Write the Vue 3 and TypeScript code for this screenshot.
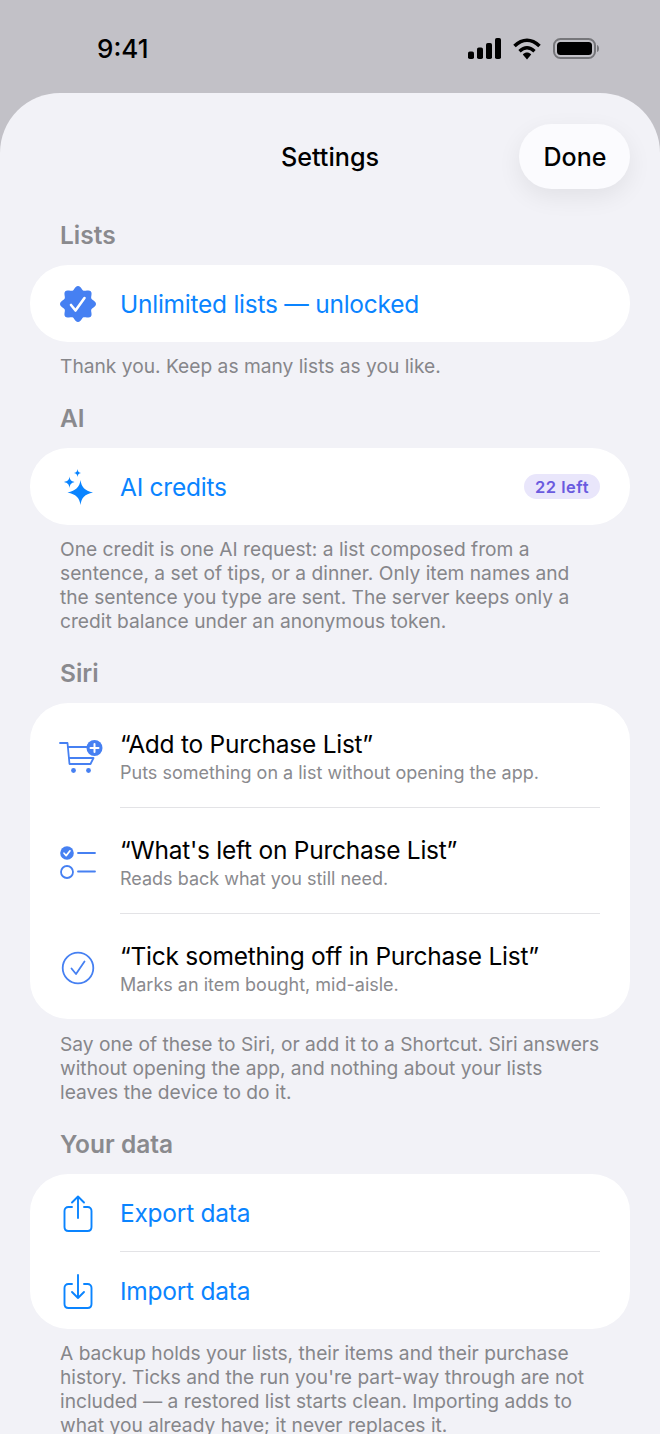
<script setup lang="ts">
const siriRows = [
  { title: '“Add to Purchase List”', sub: 'Puts something on a list without opening the app.', icon: 'cart' },
  { title: '“What\'s left on Purchase List”', sub: 'Reads back what you still need.', icon: 'list' },
  { title: '“Tick something off in Purchase List”', sub: 'Marks an item bought, mid-aisle.', icon: 'check' }
]

// scalloped seal outline for the unlocked badge
const sealPath = (() => {
  const points: string[] = []
  for (let i = 0; i < 96; i++) {
    const a = (i / 96) * Math.PI * 2
    const r = 16.2 + 1.8 * Math.cos(a * 8)
    const x = 18 + r * Math.sin(a)
    const y = 18 - r * Math.cos(a)
    points.push(`${x.toFixed(2)} ${y.toFixed(2)}`)
  }
  return `M${points.join('L')}Z`
})()
</script>

<template>
  <div class="screen">
    <div class="status-bar">
      <span class="time">9:41</span>
      <div class="status-icons">
        <svg width="33" height="21" viewBox="0 0 33 21">
          <rect x="0" y="13.500" width="6" height="7.500" rx="1.800" fill="#000" />
          <rect x="9" y="9.500" width="6" height="11.500" rx="1.800" fill="#000" />
          <rect x="18" y="5" width="6" height="16" rx="1.800" fill="#000" />
          <rect x="27" y="0" width="6" height="21" rx="1.800" fill="#000" />
        </svg>
        <svg width="28" height="22" viewBox="0 0 28 22">
          <path d="M1.500 8C9.500 0.300 18.500 0.300 26.500 8" fill="none" stroke="#000" stroke-width="3.600" />
          <path d="M6.500 13.200C11.500 8.700 16.500 8.700 21.500 13.200" fill="none" stroke="#000" stroke-width="3.400" />
          <path d="M9.800 16.400C12.500 14 15.500 14 18.200 16.400L14 21.500Z" fill="#000" />
        </svg>
        <svg width="46" height="21" viewBox="0 0 46 21">
          <rect x="1" y="1" width="41" height="19" rx="6.500" fill="none" stroke="#76767a" stroke-width="2" />
          <rect x="4" y="4" width="35" height="13" rx="3.500" fill="#000" />
          <path d="M44 7C45.500 7.500 46 9 46 10.500C46 12 45.500 13.500 44 14Z" fill="#77777b" />
        </svg>
      </div>
    </div>

    <div class="sheet">
      <header class="nav">
        <h1 class="nav-title">Settings</h1>
        <button class="done">Done</button>
      </header>

      <section class="group">
        <h2 class="group-label">Lists</h2>
        <div class="card">
          <div class="row">
            <div class="row-icon">
              <svg width="36" height="36" viewBox="0 0 36 36">
                <path :d="sealPath" fill="#4680f2" />
                <path d="M11 19L15.500 24.500L24.500 12" fill="none" stroke="#fff" stroke-width="2.600" stroke-linecap="round" stroke-linejoin="round" />
              </svg>
            </div>
            <span class="row-link">Unlimited lists — unlocked</span>
          </div>
        </div>
        <p class="note">Thank you. Keep as many lists as you like.</p>
      </section>

      <section class="group">
        <h2 class="group-label">AI</h2>
        <div class="card">
          <div class="row">
            <div class="row-icon">
              <svg class="sparkle" width="34" height="38" viewBox="0 0 34 38">
                <path d="M17.500 12C18.500 19 21.500 22.500 30 24.500C21.500 26.500 18.500 29.500 17.500 37C16.500 29.500 13 26.500 4.500 24.500C13 22.500 16.500 19 17.500 12Z" fill="#0a84ff" />
                <path d="M6.500 8.500C7 12 8 13 11.500 14C8 15 7 16.500 6.500 20C6 16.500 5 15 1 14C5 13 6 12 6.500 8.500Z" fill="#0a84ff" />
                <path d="M14.500 1C14.800 3.500 15.500 4.200 18 5C15.500 5.800 14.800 6.500 14.500 9C14.200 6.500 13.500 5.800 11 5C13.500 4.200 14.200 3.500 14.500 1Z" fill="#0a84ff" />
              </svg>
            </div>
            <span class="row-link">AI credits</span>
            <span class="badge">22 left</span>
          </div>
        </div>
        <p class="note">One credit is one AI request: a list composed from a sentence, a set of tips, or a dinner. Only item names and the sentence you type are sent. The server keeps only a credit balance under an anonymous token.</p>
      </section>

      <section class="group">
        <h2 class="group-label">Siri</h2>
        <div class="card">
          <div v-for="(item, i) in siriRows" :key="i" class="row siri-row">
            <div class="row-icon">
              <svg v-if="item.icon === 'cart'" class="cart" width="44" height="36" viewBox="0 0 44 36">
                <path d="M1 4H8.500L10.500 25H31.500L34.500 19H10M9 8H28" fill="none" stroke="#4680f2" stroke-width="1.800" stroke-linecap="round" stroke-linejoin="round" />
                <circle cx="14.500" cy="31.500" r="2.400" fill="#4680f2" />
                <circle cx="29.500" cy="31.500" r="2.400" fill="#4680f2" />
                <circle cx="35.500" cy="9" r="8" fill="#4680f2" />
                <path d="M35.500 5V13M31.500 9H39.500" stroke="#fff" stroke-width="2" stroke-linecap="round" />
              </svg>
              <svg v-else-if="item.icon === 'list'" width="36" height="34" viewBox="0 0 36 34">
                <circle cx="7" cy="8" r="6.800" fill="#4680f2" />
                <path d="M4 8.200L6.200 10.600L10 5.800" fill="none" stroke="#fff" stroke-width="1.700" stroke-linecap="round" stroke-linejoin="round" />
                <circle cx="7" cy="27" r="6" fill="none" stroke="#4680f2" stroke-width="1.800" />
                <path d="M18 8H35M18 26.500H35" stroke="#4680f2" stroke-width="1.800" stroke-linecap="round" />
              </svg>
              <svg v-else width="34" height="34" viewBox="0 0 34 34">
                <circle cx="17" cy="17" r="15.300" fill="none" stroke="#4680f2" stroke-width="1.800" />
                <path d="M10.500 17.500L15 23L23.500 10.500" fill="none" stroke="#4680f2" stroke-width="1.800" stroke-linecap="round" stroke-linejoin="round" />
              </svg>
            </div>
            <div class="siri-text">
              <span class="siri-title">{{ item.title }}</span>
              <span class="siri-sub">{{ item.sub }}</span>
            </div>
          </div>
        </div>
        <p class="note siri-note">Say one of these to Siri, or add it to a Shortcut. Siri answers without opening the app, and nothing about your lists leaves the device to do it.</p>
      </section>

      <section class="group">
        <h2 class="group-label">Your data</h2>
        <div class="card">
          <div class="row data-row">
            <div class="row-icon">
              <svg class="export" width="30" height="38" viewBox="0 0 30 38">
                <path d="M9 12H5.500C3 12 1.500 13.500 1.500 16V32C1.500 34.500 3 36 5.500 36H24.500C27 36 28.500 34.500 28.500 32V16C28.500 13.500 27 12 24.500 12H21" fill="none" stroke="#0a84ff" stroke-width="1.900" stroke-linecap="round" />
                <path d="M15 23V2M9 7.500L15 1.500L21 7.500" fill="none" stroke="#0a84ff" stroke-width="1.900" stroke-linecap="round" stroke-linejoin="round" />
              </svg>
            </div>
            <span class="row-link">Export data</span>
          </div>
          <div class="row data-row">
            <div class="row-icon">
              <svg width="30" height="38" viewBox="0 0 30 38">
                <path d="M9 12H5.500C3 12 1.500 13.500 1.500 16V32C1.500 34.500 3 36 5.500 36H24.500C27 36 28.500 34.500 28.500 32V16C28.500 13.500 27 12 24.500 12H21" fill="none" stroke="#0a84ff" stroke-width="1.900" stroke-linecap="round" />
                <path d="M15 3V26M9 20L15 26L21 20" fill="none" stroke="#0a84ff" stroke-width="1.900" stroke-linecap="round" stroke-linejoin="round" />
              </svg>
            </div>
            <span class="row-link">Import data</span>
          </div>
        </div>
        <p class="note">A backup holds your lists, their items and their purchase history. Ticks and the run you're part-way through are not included — a restored list starts clean. Importing adds to what you already have; it never replaces it.</p>
      </section>
    </div>
  </div>
</template>

<style scoped>
.screen {
  width: 660px;
  height: 1434px;
  overflow: hidden;
  background: #c2c1c7;
  font-family: Inter, 'Liberation Sans', sans-serif;
  color: #000;
}
.status-bar {
  height: 93px;
  display: flex;
  justify-content: space-between;
  padding: 0 61px 0 97px;
  box-sizing: border-box;
}
.time {
  margin-top: 33px;
  font-size: 26px;
  line-height: 32px;
  font-weight: 550;
}
.status-icons {
  margin-top: 38px;
  height: 21px;
  display: flex;
  align-items: center;
  gap: 12px;
}
.sheet {
  height: 1341px;
  box-sizing: border-box;
  padding: 0 30px;
  background: #f2f2f7;
  border-radius: 60px 60px 0 0;
}
.nav {
  height: 127px;
  position: relative;
  display: flex;
  justify-content: center;
  padding-top: 46px;
  box-sizing: border-box;
}
.nav-title {
  margin: 0;
  font-size: 25.200px;
  line-height: 36px;
  font-weight: 550;
}
.done {
  position: absolute;
  top: 31px;
  right: 0;
  width: 111px;
  height: 65px;
  padding: 0 0 0 1px;
  border: none;
  border-radius: 33px;
  background: #fbfbfe;
  box-shadow: 0 8px 24px rgba(0, 0, 0, 0.07);
  font-family: inherit;
  font-size: 25px;
  font-weight: 550;
  color: #000;
}
.group-label {
  margin: 0 0 15px;
  padding-left: 30px;
  font-size: 24.500px;
  line-height: 30px;
  font-weight: 600;
  color: #8a8a8e;
}
.card {
  background: #fff;
  border-radius: 38px;
  overflow: hidden;
}
.row {
  position: relative;
  height: 77px;
  display: flex;
  align-items: center;
  padding: 0 30px;
}
.row-icon {
  width: 36px;
  margin-right: 24px;
  flex: none;
  display: flex;
  justify-content: center;
}
.row-icon svg {
  flex: none;
}
.sparkle {
  margin-left: 3px;
}
.cart {
  margin-left: 5px;
  margin-top: 2px;
}
.export {
  margin-top: 3px;
}
.row-link {
  font-size: 24.500px;
  letter-spacing: -0.25px;
  color: #0a84ff;
}
.badge {
  margin-left: auto;
  height: 25px;
  padding: 0 11px;
  display: flex;
  align-items: center;
  border-radius: 13px;
  background: #e9e6fb;
  color: #6a5adf;
  font-size: 16.500px;
  font-weight: 600;
  letter-spacing: 0.5px;
}
.note {
  margin: 12px 0 0;
  padding: 0 29px 0 30px;
  font-size: 19.200px;
  line-height: 24px;
  color: #86868a;
}
.siri-note {
  margin-top: 13px;
}
.group {
  margin-bottom: 25px;
}
.siri-row {
  height: 106px;
  box-sizing: border-box;
  padding-top: 4px;
}
.siri-row:first-child {
  height: 104px;
  padding-top: 2px;
}
.siri-row + .siri-row::before,
.data-row + .data-row::before {
  content: '';
  position: absolute;
  top: 0;
  left: 90px;
  right: 30px;
  height: 1px;
  background: #e3e3e6;
}
.siri-text {
  display: flex;
  flex-direction: column;
}
.siri-title {
  font-size: 24.500px;
  letter-spacing: -0.25px;
  line-height: 33px;
}
.siri-sub {
  font-size: 18px;
  line-height: 24px;
  color: #8a8a8e;
}
.data-row {
  height: 78px;
  box-sizing: border-box;
  padding-top: 2px;
}
.data-row:first-child {
  height: 77px;
  padding-top: 0;
}
</style>
